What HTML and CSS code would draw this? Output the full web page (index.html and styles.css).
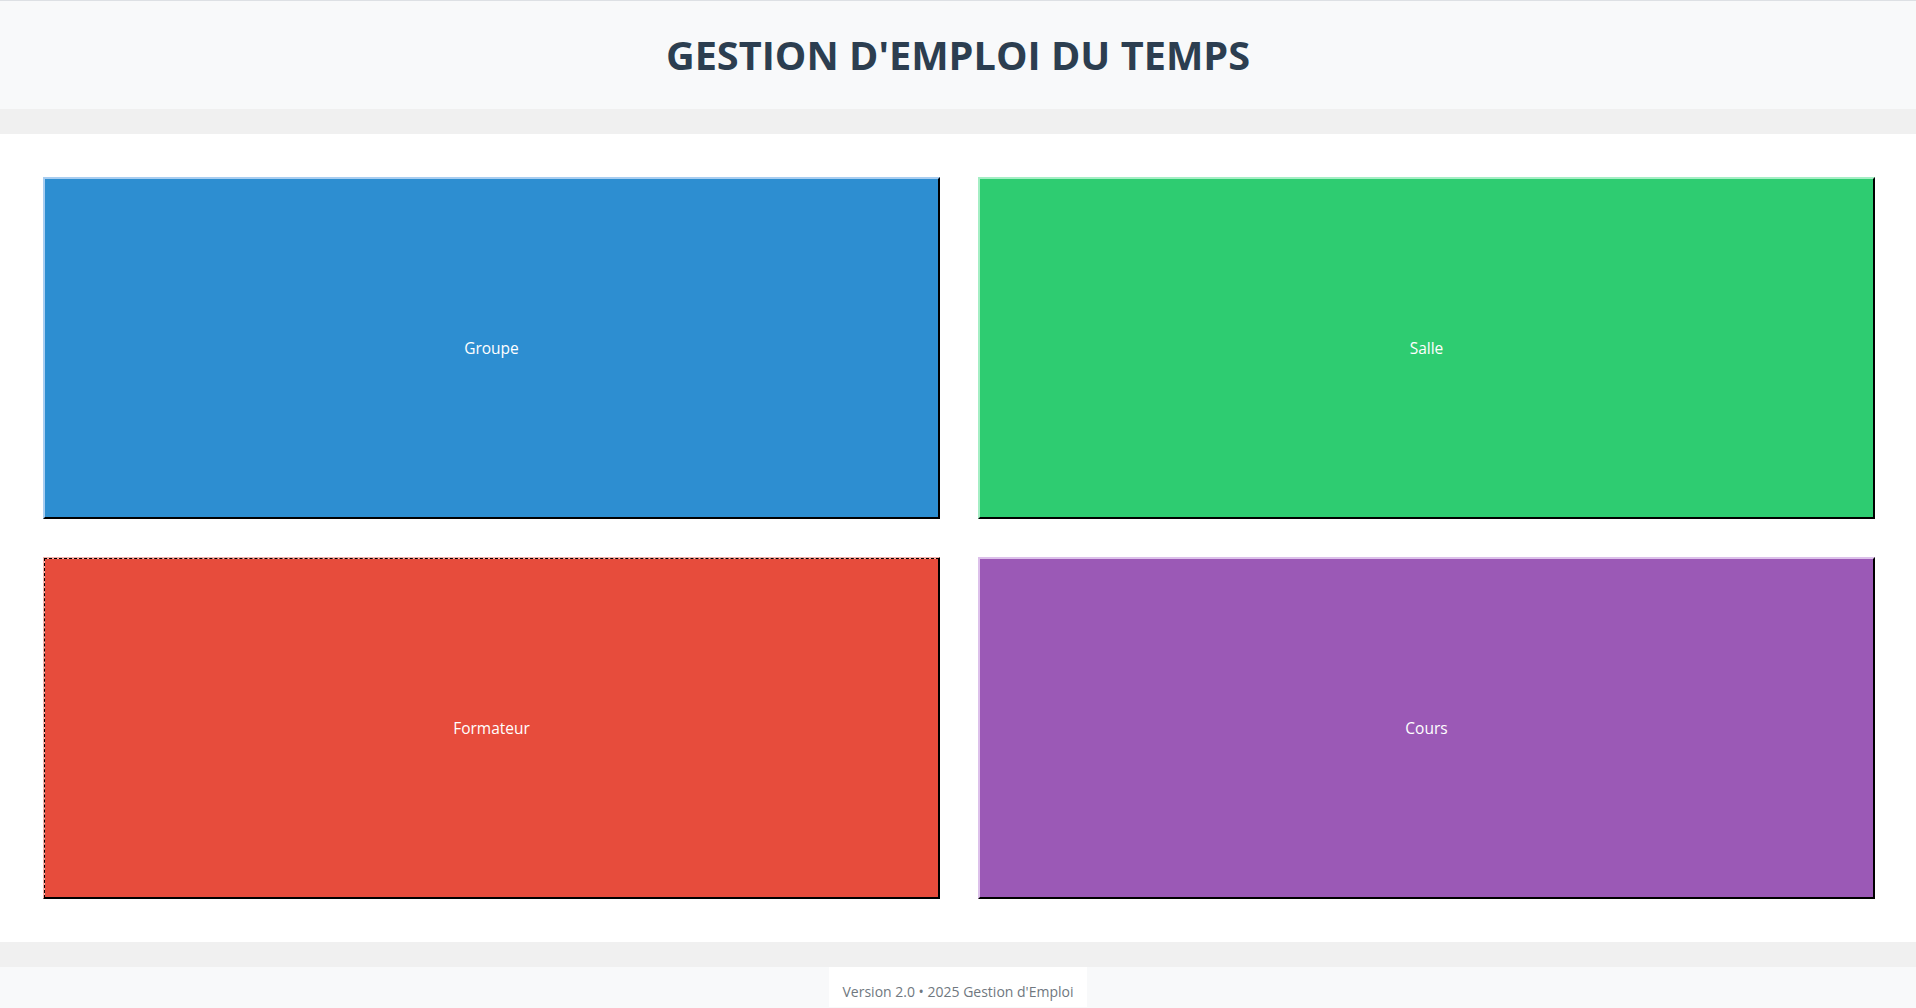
FILE: index.html
```html
<!DOCTYPE html>
<html lang="fr">
<head>
<meta charset="utf-8">
<title>Gestion d'Emploi du Temps</title>
<link rel="stylesheet" href="styles.css">
</head>
<body>
<header class="header">
  <h1 class="title">GESTION D'EMPLOI DU TEMPS</h1>
</header>
<main class="main">
  <div class="grid">
    <button class="tile tile-blue">Groupe</button>
    <button class="tile tile-green">Salle</button>
    <button class="tile tile-red tile-focus">Formateur</button>
    <button class="tile tile-purple">Cours</button>
  </div>
</main>
<footer class="footer">
  <p class="footer-text">Version 2.0 • 2025 Gestion d'Emploi</p>
</footer>
</body>
</html>
```
FILE: styles.css
```css
html, body {
  margin: 0;
  padding: 0;
}
body {
  background: #f0f0f0;
  font-family: "Open Sans", "Noto Sans", sans-serif;
}
.header {
  background: #f8f9fa;
  border-top: 1px solid #dde0e4;
  height: 108px;
  display: flex;
  align-items: center;
  justify-content: center;
  margin-bottom: 25px;
}
.title {
  margin: 0;
  font-size: 39.7px;
  font-weight: 700;
  color: #2c3e50;
}
.main {
  background: #ffffff;
  padding: 43px 41px 43px 43px;
}
.grid {
  display: grid;
  grid-template-columns: 1fr 1fr;
  grid-template-rows: 342px 342px;
  gap: 38px;
}
.tile {
  border: 2px outset;
  font-family: "Open Sans", "Noto Sans", sans-serif;
  font-size: 15.5px;
  color: #ffffff;
  cursor: pointer;
  margin: 0;
  padding: 0;
}
.tile-blue {
  background: #2d8ed1;
  border-color: #a8cdf0 #222 #222 #a8cdf0;
}
.tile-green {
  background: #2ecc71;
  border-color: #a4eec4 #222 #222 #a4eec4;
}
.tile-red {
  background: #e74c3c;
  border-color: #f5b1aa #222 #222 #f5b1aa;
}
.tile-purple {
  background: #9b59b6;
  border-color: #dcc0ea #222 #222 #dcc0ea;
}
.tile-focus {
  outline: 1px dashed #000;
  outline-offset: -2px;
}
.footer {
  margin-top: 25px;
  background: #f8f9fa;
  display: flex;
  justify-content: center;
  height: 60px;
}
.footer-text {
  margin: 0;
  background: #ffffff;
  padding: 15px 14px 0;
  height: 40px;
  box-sizing: border-box;
  font-size: 14px;
  color: #707880;
}
```
